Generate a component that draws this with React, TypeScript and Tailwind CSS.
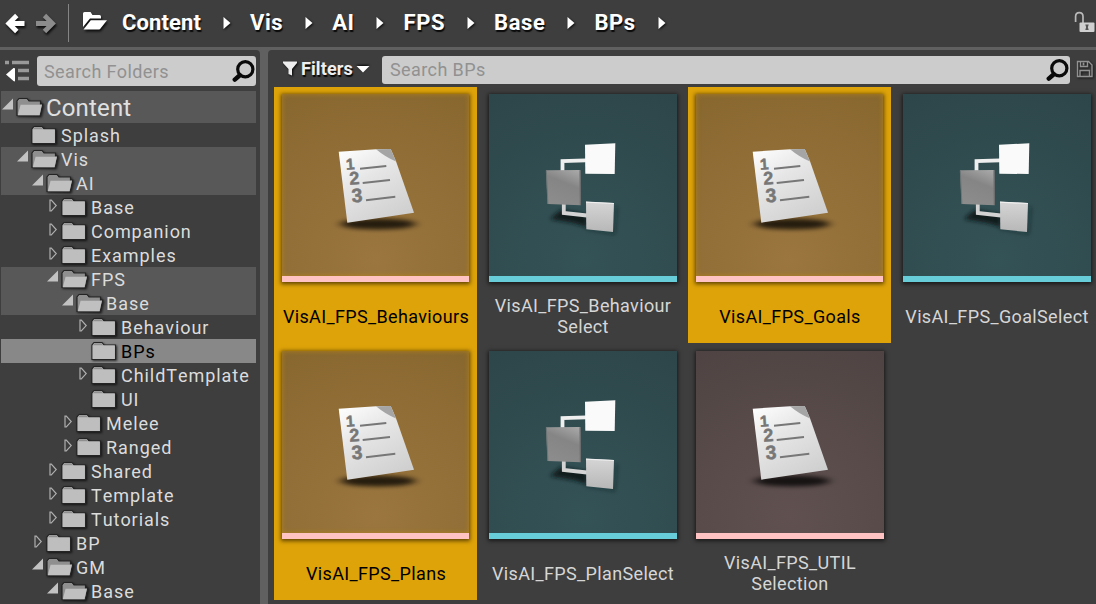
import React from "react";

type Row = { name: string; depth: number; state: "open" | "closed" | "leaf"; look?: "path" | "current" };
type Kind = "list" | "tree";
type Asset = { lines: string[]; kind: Kind; selected?: boolean; joined?: boolean };

const crumbs = [
  { name: "Content", spacing: "tracking-[0.1px]" },
  { name: "Vis", spacing: "tracking-[0.6px]" },
  { name: "AI", spacing: "tracking-[0.5px]" },
  { name: "FPS", spacing: "tracking-[0.6px]" },
  { name: "Base", spacing: "tracking-[0.6px]" },
  { name: "BPs", spacing: "tracking-[0.5px]" },
];

const rows: Row[] = [
  { name: "Splash", depth: 1, state: "leaf" },
  { name: "Vis", depth: 1, state: "open", look: "path" },
  { name: "AI", depth: 2, state: "open", look: "path" },
  { name: "Base", depth: 3, state: "closed" },
  { name: "Companion", depth: 3, state: "closed" },
  { name: "Examples", depth: 3, state: "closed" },
  { name: "FPS", depth: 3, state: "open", look: "path" },
  { name: "Base", depth: 4, state: "open", look: "path" },
  { name: "Behaviour", depth: 5, state: "closed" },
  { name: "BPs", depth: 5, state: "leaf", look: "current" },
  { name: "ChildTemplate", depth: 5, state: "closed" },
  { name: "UI", depth: 5, state: "leaf" },
  { name: "Melee", depth: 4, state: "closed" },
  { name: "Ranged", depth: 4, state: "closed" },
  { name: "Shared", depth: 3, state: "closed" },
  { name: "Template", depth: 3, state: "closed" },
  { name: "Tutorials", depth: 3, state: "closed" },
  { name: "BP", depth: 2, state: "closed" },
  { name: "GM", depth: 2, state: "open" },
  { name: "Base", depth: 3, state: "open" },
];

const assets: Asset[] = [
  { lines: ["VisAI_FPS_Behaviours"], kind: "list", selected: true, joined: true },
  { lines: ["VisAI_FPS_Behaviour", "Select"], kind: "tree" },
  { lines: ["VisAI_FPS_Goals"], kind: "list", selected: true },
  { lines: ["VisAI_FPS_GoalSelect"], kind: "tree" },
  { lines: ["VisAI_FPS_Plans"], kind: "list", selected: true },
  { lines: ["VisAI_FPS_PlanSelect"], kind: "tree" },
  { lines: ["VisAI_FPS_UTIL", "Selection"], kind: "list" },
];

function Folder({ open }: { open: boolean }) {
  return (
    <svg width="28" height="24" viewBox="0 -2 28 24" className="shrink-0 drop-shadow-[1px_1px_1px_rgba(0,0,0,0.7)]">
      <path
        d={open ? "M1 18.5V4L3 1.5h8L13 4h11.5v3h2.3L24.2 18.8z" : "M1 18.5V4L3 1.5h8L13 4h11.5v14.5z"}
        fill={open ? "#8f8f8f" : "#c0c0c0"}
        stroke="#242424"
        strokeWidth="1.2"
      />
      <path d="M1.8 4.2L3.4 2.2h7.2L12.4 4.6H1.8z" fill="#8f8f8f" />
      {open && <path d="M4.6 7.8H25.9L23.5 18.2H1.8z" fill="#c0c0c0" />}
      {!open && <path d="M1.7 4.6h22v13.2h-22z" fill="#bebebe" />}
    </svg>
  );
}

function Expander({ state }: { state: Row["state"] }) {
  return (
    <svg width="15" height="20" viewBox="0 0 15 20" className="shrink-0">
      {state === "open" && <path d="M1 14.5H12V3.5z" fill="#c2c2c2" />}
      {state === "closed" && <path d="M4 5.2h1.3L10.2 10.6 5.3 16H4z" fill="none" stroke="#b0b0b0" strokeWidth="1.2" />}
    </svg>
  );
}

function Magnifier() {
  return (
    <svg width="24" height="24" viewBox="0 0 24 24" className="shrink-0">
      <circle cx="13.3" cy="10.3" r="7.6" fill="none" stroke="#0a0a0a" strokeWidth="3.2" />
      <path d="M7.8 16.3L2.8 20.6" stroke="#0a0a0a" strokeWidth="4.5" strokeLinecap="round" />
    </svg>
  );
}

function ListArt({ id }: { id: string }) {
  return (
    <svg width="188" height="182" viewBox="0 0 188 182" className="block shrink-0">
      <defs>
        <linearGradient id={`p${id}`} x1="0.1" y1="0" x2="0.7" y2="1">
          <stop offset="0" stopColor="#fdfdfd" />
          <stop offset="0.4" stopColor="#e6e6e6" />
          <stop offset="1" stopColor="#cfcfcf" />
        </linearGradient>
        <filter id={`s${id}`} x="-30%" y="-100%" width="160%" height="300%">
          <feGaussianBlur stdDeviation="5 2" />
        </filter>
      </defs>
      <ellipse cx="96" cy="130" rx="38" ry="5.5" fill="#000" opacity="0.75" filter={`url(#s${id})`} />
      <path d="M56.7 57.7L94 55.3 108.7 55 114 67.3 132 118.7 65.3 128.7z" fill={`url(#p${id})`} />
      <path d="M94 55.3L108.7 55 114 67.5Q104 63.5 94 55.3z" fill="#a5a5a5" />
      <path d="M78 74.7L104.3 72M80.7 89L108 86M84 106.3L113.3 102.7" stroke="#777" strokeWidth="2" />
      <g fill="#777" stroke="#777" strokeWidth="0.5" fontFamily="Liberation Sans, sans-serif" fontWeight="700" textAnchor="middle">
        <text x="68.3" y="75.6" fontSize="15.5" transform="rotate(-4 68 71)">1</text>
        <text x="72.3" y="90.5" fontSize="18" transform="rotate(-4 72 85)">2</text>
        <text x="75" y="108.2" fontSize="19.5" transform="rotate(-4 75 102)">3</text>
      </g>
    </svg>
  );
}

function TreeArt({ id }: { id: string }) {
  return (
    <svg width="188" height="182" viewBox="0 0 188 182" className="block shrink-0">
      <defs>
        <linearGradient id={`g${id}`} x1="0.8" y1="0" x2="0.4" y2="1">
          <stop offset="0" stopColor="#a6a6a6" />
          <stop offset="0.4" stopColor="#858585" />
          <stop offset="1" stopColor="#8c8c8c" />
        </linearGradient>
        <linearGradient id={`l${id}`} x1="0" y1="0" x2="0" y2="1">
          <stop offset="0" stopColor="#d5d5d5" />
          <stop offset="1" stopColor="#b7b7b7" />
        </linearGradient>
        <filter id={`s${id}`} x="-40%" y="-60%" width="180%" height="220%">
          <feGaussianBlur stdDeviation="2" />
        </filter>
      </defs>
      <path d="M61 125L72 116 98 121 98 133 84 129z" fill="#0b1618" opacity="0.9" filter={`url(#s${id})`} />
      <path d="M97 134L125 139 127 113" stroke="#0b1618" strokeWidth="2" fill="none" opacity="0.6" filter={`url(#s${id})`} />
      <path d="M73.5 77V67.2L97 66.3" fill="none" stroke="#efefef" strokeWidth="3.8" />
      <path d="M74.8 110V119L98 121.5" fill="none" stroke="#d3d3d3" strokeWidth="3.8" />
      <path d="M96 50.7L126.3 49.3 125.7 80 96.3 79.7z" fill="#fafafa" />
      <path d="M57 76.3L91.3 76 91.7 111.3 58.7 110z" fill={`url(#g${id})`} />
      <path d="M91 76.3L91.4 111" stroke="#6e6e6e" strokeWidth="1.2" />
      <path d="M57.3 76.5L58.9 110" stroke="#6d7677" strokeWidth="1" />
      <path d="M97 107.7L125 109 124 138 97.3 135.3z" fill={`url(#l${id})`} />
      <path d="M97 108.2L125 109.5" stroke="#f0f0f0" strokeWidth="1.2" />
    </svg>
  );
}

function Tile({ asset, index }: { asset: Asset; index: number }) {
  const { kind, selected, lines, joined } = asset;
  const bg =
    kind === "tree"
      ? "bg-[radial-gradient(circle_at_50%_88%,#345357,#2d4649)]"
      : selected
        ? "bg-[radial-gradient(circle_at_50%_88%,#9b763f,#88672f)]"
        : "bg-[radial-gradient(circle_at_50%_88%,#605150,#4f4443)]";
  return (
    <div
      className={`flex w-[203px] flex-col pt-[7px] ${joined ? "-mb-px h-[257px]" : "h-64"} ${
        selected ? "bg-[#dea309] text-black" : "text-[#d6d6d6]"
      }`}
    >
      <div
        className={`relative ml-2 flex h-[188px] flex-col ${bg} ${
          selected
            ? "w-[187px] shadow-[0_1px_4px_1px_rgba(50,35,0,0.75)]"
            : "w-[188px] shadow-[0_1px_4px_1px_rgba(0,0,0,0.6)]"
        }`}
      >
        {kind === "list" ? <ListArt id={`a${index}`} /> : <TreeArt id={`a${index}`} />}
        {selected && <div className="absolute inset-x-0 top-0 h-[182px] shadow-[inset_0_0_5px_0_rgba(190,140,15,0.7)]" />}
        <div className={`h-1.5 shrink-0 ${kind === "list" ? "bg-[#ffc3c3]" : "bg-[#67cdd9]"}`} />
      </div>
      <div className="flex h-[61px] flex-col items-center justify-center pt-[7px] pl-px text-[18px] leading-[21px] tracking-[0.36px]">
        {lines.map((l) => (
          <span key={l} className="whitespace-nowrap">{l}</span>
        ))}
      </div>
    </div>
  );
}

export default function App() {
  return (
    <div className="flex h-[604px] w-[1096px] flex-col overflow-hidden bg-[#3e3e3e] font-['Roboto',sans-serif]">
      <header className="flex h-[47px] shrink-0 items-center pl-[5px] pb-[2px]">
        <svg width="52" height="26" viewBox="0 0 52 26" className="shrink-0 drop-shadow-[1px_2px_1px_rgba(0,0,0,0.8)]">
          <path d="M19.5 13.5H4M11.8 5.5L3.8 13.5 11.8 21.5" fill="none" stroke="#fff" strokeWidth="4.8" />
          <path d="M31 13.5H47M39.5 5.5L47.5 13.5 39.5 21.5" fill="none" stroke="#8c8c8c" strokeWidth="4.8" />
        </svg>
        <div className="ml-[11px] h-[38px] w-px bg-[#858585]" />
        <svg width="26" height="20" viewBox="0 0 26 20" className="-mt-1 ml-[13px] shrink-0 drop-shadow-[1px_2px_1px_rgba(0,0,0,0.8)]">
          <path d="M1 16V2.5Q1 1 2.5 1H8.5L10.5 4H17.5Q19 4 19 5.5V7.5H8L1 16z" fill="#fff" />
          <path d="M8.8 9.2H25L18.5 17.5Q18 18.4 17 18.4H1.5z" fill="#fff" />
        </svg>
        <nav className="ml-[14px] flex items-center text-[22px] font-bold leading-7 text-white [font-kerning:none] [text-shadow:1px_2px_1px_rgba(0,0,0,0.85)]">
          {crumbs.map((c) => (
            <div key={c.name} className="flex items-center">
              <span className={c.spacing}>{c.name}</span>
              <svg width="8" height="14" viewBox="0 0 8 14" className="mr-[19px] ml-[22px] drop-shadow-[1px_1px_1px_rgba(0,0,0,0.8)]">
                <path d="M0.5 1L7.5 7 0.5 13z" fill="#fff" />
              </svg>
            </div>
          ))}
        </nav>
        <svg width="22" height="22" viewBox="0 0 22 22" className="-mt-[2px] ml-auto shrink-0">
          <path d="M1.6 11V5.5Q1.6 1.6 5.3 1.6T9 5.5V12" fill="none" stroke="#b9b9b9" strokeWidth="1.7" />
          <rect x="5.5" y="11.5" width="15" height="9.5" rx="1" fill="#d0d0d0" />
          <path d="M11.3 13.5h3.4l-.8 2.7.8 2.8h-3.4l.8-2.8z" fill="#555" />
        </svg>
      </header>

      <div className="flex min-h-0 flex-1 bg-[#606060] pt-[3px]">
        <aside className="flex w-[260px] shrink-0 flex-col rounded-tr-[4px] bg-[#3e3e3e] pt-[6px]">
          <div className="flex h-[30px] shrink-0 items-center">
            <svg width="27" height="24" viewBox="0 0 27 24" className="ml-1 shrink-0">
              <path d="M1 3.5h4M8 3.5h17M14 11.5h11M14 19.5h11" stroke="#999" strokeWidth="3.4" />
              <path d="M2 15.500L9.500 9Q11 8.500 11 10V21.500Q11 23 9.500 22z" fill="#fff" />
            </svg>
            <div className="ml-[6px] flex h-[30px] w-[219px] items-center rounded-[3px] bg-[#cccccc] pl-[7px] text-[18px] tracking-[0.4px] text-[#919191]">
              <span className="flex-1">Search Folders</span>
              <Magnifier />
            </div>
          </div>
          <div className="mt-[5px] mr-1 ml-px flex flex-col [font-kerning:none]">
            <div className="flex h-8 shrink-0 items-center bg-[#585858] text-[24px] tracking-[0.15px] text-[#e0e0e0]">
              <div className="-mt-1"><Expander state="open" /></div>
              <Folder open />
              <span className="ml-[2px] pt-[2px]">Content</span>
            </div>
            {rows.map((r, i) => (
              <div
                key={i}
                className={`flex h-6 shrink-0 items-center text-[18px] tracking-[0.95px] ${
                  r.look === "current" ? "bg-[#888888] text-black" : r.look === "path" ? "bg-[#585858] text-[#dcdcdc]" : "text-[#dcdcdc]"
                }`}
              >
                <div className="shrink-0" style={{ width: r.depth * 15 }} />
                <div className="-mt-1"><Expander state={r.state} /></div>
                <Folder open={r.state === "open"} />
                <span className="ml-[2px] whitespace-nowrap">{r.name}</span>
              </div>
            ))}
          </div>
        </aside>

        <main className="ml-2 flex min-w-0 flex-1 flex-col rounded-tl-[4px] bg-[#3e3e3e] pt-[6px]">
          <div className="flex h-7 shrink-0 items-center">
            <svg width="16" height="18" viewBox="0 0 16 18" className="-mt-[3px] ml-[14px] shrink-0 drop-shadow-[1px_1px_1px_rgba(0,0,0,0.9)]">
              <path d="M1 1.5H15V3L10 9V15.5L6.5 14V9L1 3z" fill="#eee" />
            </svg>
            <span className="-mt-[3px] ml-[3px] w-[54px] text-[18px] font-bold tracking-[0.1px] text-[#eee] [text-shadow:1px_2px_1px_rgba(0,0,0,0.9)]">Filters</span>
            <svg width="14" height="10" viewBox="0 0 14 10" className="-mt-[2px] ml-[1px] shrink-0 drop-shadow-[0px_-1px_1px_rgba(0,0,0,0.9)]">
              <path d="M0.5 2H13.500L7 8.500z" fill="#fff" />
            </svg>
            <div className="ml-3 flex h-7 w-[688px] items-center rounded-[3px] bg-[#cccccc] pl-2 text-[18px] tracking-[0.4px] text-[#919191]">
              <span className="-mt-[2px] flex-1">Search BPs</span>
              <Magnifier />
            </div>
            <svg width="18" height="18" viewBox="0 0 18 18" className="-mt-[2px] ml-[6px] shrink-0 drop-shadow-[1px_1px_1px_rgba(0,0,0,0.7)]">
              <path d="M1.5 1.5H12.5L16 5V16.5H1.5zM4.5 1.5V6.5H11.5V1.5M4 16.5V10.5H13.5V16.5" fill="none" stroke="#929292" strokeWidth="1.4" />
              <path d="M7.5 2.5v3" stroke="#929292" strokeWidth="1.8" />
            </svg>
          </div>
          <div className="mt-[3px] ml-[6px] grid grid-cols-[repeat(4,203px)] gap-x-1 gap-y-px">
            {assets.map((a, i) => (
              <Tile key={a.lines.join()} asset={a} index={i} />
            ))}
          </div>
        </main>
      </div>
    </div>
  );
}
